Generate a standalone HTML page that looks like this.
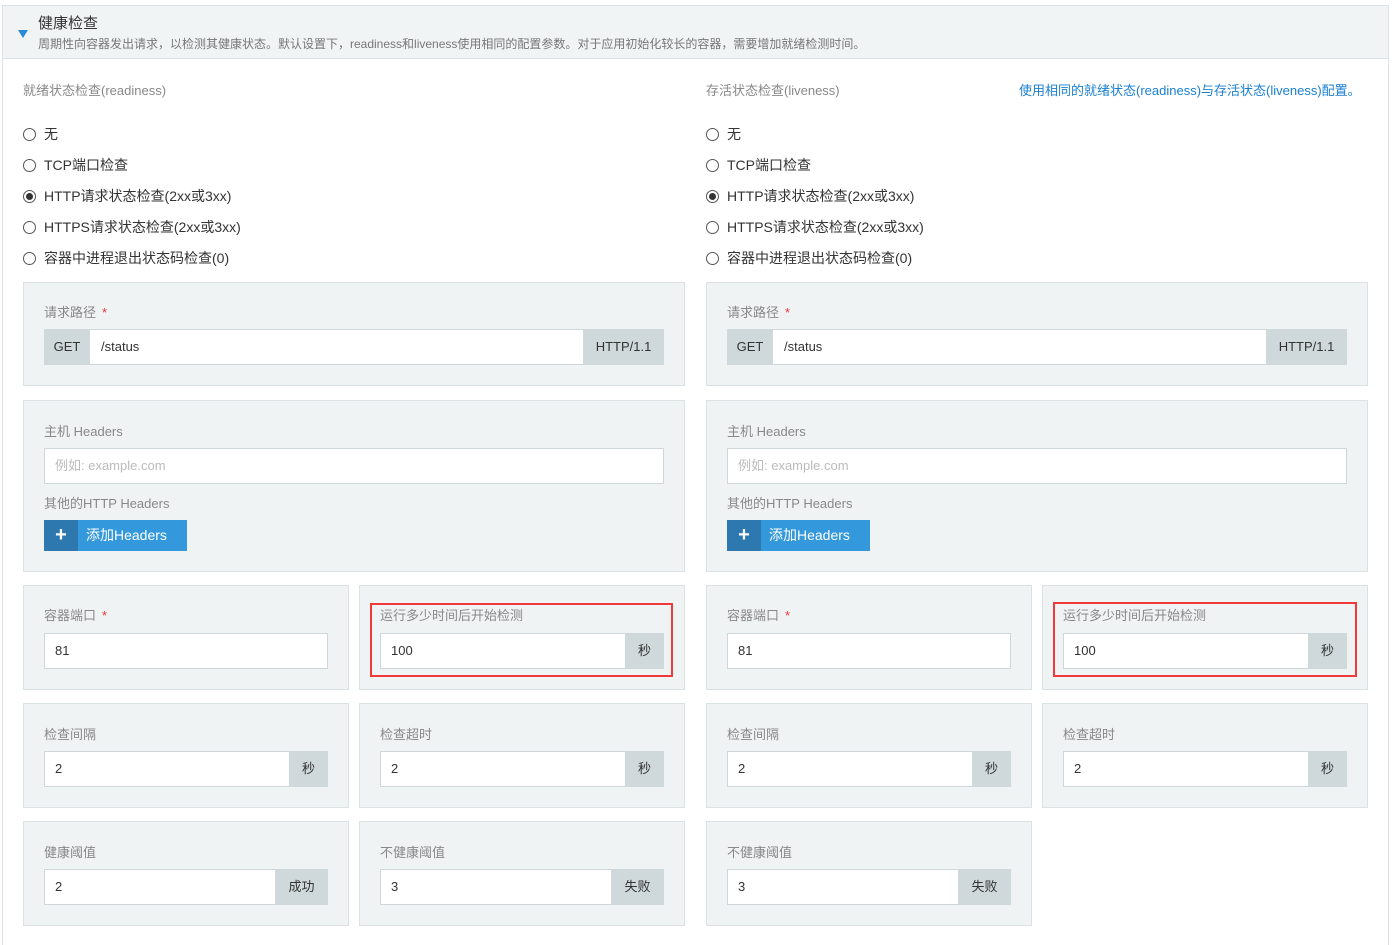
<!DOCTYPE html>
<html><head><meta charset="utf-8"><style>
*{box-sizing:border-box;margin:0;padding:0}
body{width:1393px;height:936px;background:#fff;position:relative;overflow:hidden;font-family:"Liberation Sans","Noto Sans CJK SC",sans-serif;color:#333}
.a{position:absolute}
.outer{left:2px;top:5px;width:1387px;height:940px;border:1px solid #dde3e5;border-bottom:none}
.hdr{left:2px;top:5px;width:1387px;height:54px;background:#f0f4f5;border:1px solid #dde3e5}
.p{position:absolute;background:#f0f3f4;border:1px solid #dbe2e4}
.l{position:absolute;font-size:13px;color:#888;white-space:nowrap;line-height:16px}
.st{color:#e33;margin-left:6px}
.in{position:absolute;height:36px;background:#fff;border:1px solid #cfd7da;font-size:13px;color:#333;line-height:34px;padding-left:10px;white-space:nowrap}
.ad{position:absolute;height:36px;background:#cfd8db;font-size:13px;color:#333;line-height:36px;text-align:center}
.r{position:absolute;font-size:14px;color:#333;white-space:nowrap;line-height:16px}
.r i{display:inline-block;width:13px;height:13px;border:1px solid #555;border-radius:50%;vertical-align:-2px;margin-right:8px;position:relative}
.r i.on:after{content:"";position:absolute;left:2px;top:2px;width:7px;height:7px;border-radius:50%;background:#333}
.red{position:absolute;border:2px solid #f03a3a}
.btn{position:absolute;height:31px;width:143px;background:#3398dc;color:#fff;font-size:14px;line-height:31px}
.btn b{position:absolute;left:0;top:0;width:34px;height:31px;background:#2e78b0;text-align:center;font-size:20px;line-height:30px}
.btn span{position:absolute;left:42px}
</style></head><body>
<div class="a outer"></div>
<div class="a hdr"></div>
<div class="a" style="left:18px;top:30px;width:0;height:0;border-left:5px solid transparent;border-right:5px solid transparent;border-top:8px solid #2a8ad6"></div>
<div class="a" style="left:38px;top:12px;font-size:15px;color:#333">健康检查</div>
<div class="a" style="left:38px;top:35px;font-size:12px;color:#777;white-space:nowrap">周期性向容器发出请求，以检测其健康状态。默认设置下，readiness和liveness使用相同的配置参数。对于应用初始化较长的容器，需要增加就绪检测时间。</div>

<div class="l" style="left:23px;top:83px">就绪状态检查(readiness)</div>
<div class="l" style="left:706px;top:83px">存活状态检查(liveness)</div>
<div class="l" style="left:1019px;top:83px;color:#1a7fd0">使用相同的就绪状态(readiness)与存活状态(liveness)配置。</div>

<div class="r" style="left:23px;top:126px"><i></i>无</div>
<div class="r" style="left:23px;top:157px"><i></i>TCP端口检查</div>
<div class="r" style="left:23px;top:188px"><i class="on"></i>HTTP请求状态检查(2xx或3xx)</div>
<div class="r" style="left:23px;top:219px"><i></i>HTTPS请求状态检查(2xx或3xx)</div>
<div class="r" style="left:23px;top:250px"><i></i>容器中进程退出状态码检查(0)</div>
<div class="r" style="left:706px;top:126px"><i></i>无</div>
<div class="r" style="left:706px;top:157px"><i></i>TCP端口检查</div>
<div class="r" style="left:706px;top:188px"><i class="on"></i>HTTP请求状态检查(2xx或3xx)</div>
<div class="r" style="left:706px;top:219px"><i></i>HTTPS请求状态检查(2xx或3xx)</div>
<div class="r" style="left:706px;top:250px"><i></i>容器中进程退出状态码检查(0)</div>

<!-- left -->
<div class="p" style="left:23px;top:282px;width:662px;height:104px"></div>
<div class="l" style="left:44px;top:305px">请求路径<span class="st">*</span></div>
<div class="in" style="left:44px;top:329px;width:620px;padding-left:56px">/status</div>
<div class="ad" style="left:44px;top:329px;width:46px">GET</div>
<div class="ad" style="left:583px;top:329px;width:81px">HTTP/1.1</div>

<div class="p" style="left:23px;top:400px;width:662px;height:172px"></div>
<div class="l" style="left:44px;top:424px">主机 Headers</div>
<div class="in" style="left:44px;top:448px;width:620px;color:#bbb">例如: example.com</div>
<div class="l" style="left:44px;top:496px">其他的HTTP Headers</div>
<div class="btn" style="left:44px;top:520px"><b>+</b><span>添加Headers</span></div>

<div class="p" style="left:23px;top:585px;width:326px;height:105px"></div>
<div class="l" style="left:44px;top:608px">容器端口<span class="st">*</span></div>
<div class="in" style="left:44px;top:633px;width:284px">81</div>
<div class="p" style="left:359px;top:585px;width:326px;height:105px"></div>
<div class="l" style="left:380px;top:608px">运行多少时间后开始检测</div>
<div class="in" style="left:380px;top:633px;width:284px">100</div>
<div class="ad" style="left:625px;top:633px;width:39px">秒</div>
<div class="red" style="left:370px;top:603px;width:303px;height:74px"></div>

<div class="p" style="left:23px;top:703px;width:326px;height:105px"></div>
<div class="l" style="left:44px;top:727px">检查间隔</div>
<div class="in" style="left:44px;top:751px;width:284px">2</div>
<div class="ad" style="left:289px;top:751px;width:39px">秒</div>
<div class="p" style="left:359px;top:703px;width:326px;height:105px"></div>
<div class="l" style="left:380px;top:727px">检查超时</div>
<div class="in" style="left:380px;top:751px;width:284px">2</div>
<div class="ad" style="left:625px;top:751px;width:39px">秒</div>

<div class="p" style="left:23px;top:821px;width:326px;height:105px"></div>
<div class="l" style="left:44px;top:845px">健康阈值</div>
<div class="in" style="left:44px;top:869px;width:284px">2</div>
<div class="ad" style="left:275px;top:869px;width:53px">成功</div>
<div class="p" style="left:359px;top:821px;width:326px;height:105px"></div>
<div class="l" style="left:380px;top:845px">不健康阈值</div>
<div class="in" style="left:380px;top:869px;width:284px">3</div>
<div class="ad" style="left:611px;top:869px;width:53px">失败</div>

<!-- right -->
<div class="p" style="left:706px;top:282px;width:662px;height:104px"></div>
<div class="l" style="left:727px;top:305px">请求路径<span class="st">*</span></div>
<div class="in" style="left:727px;top:329px;width:620px;padding-left:56px">/status</div>
<div class="ad" style="left:727px;top:329px;width:46px">GET</div>
<div class="ad" style="left:1266px;top:329px;width:81px">HTTP/1.1</div>

<div class="p" style="left:706px;top:400px;width:662px;height:172px"></div>
<div class="l" style="left:727px;top:424px">主机 Headers</div>
<div class="in" style="left:727px;top:448px;width:620px;color:#bbb">例如: example.com</div>
<div class="l" style="left:727px;top:496px">其他的HTTP Headers</div>
<div class="btn" style="left:727px;top:520px"><b>+</b><span>添加Headers</span></div>

<div class="p" style="left:706px;top:585px;width:326px;height:105px"></div>
<div class="l" style="left:727px;top:608px">容器端口<span class="st">*</span></div>
<div class="in" style="left:727px;top:633px;width:284px">81</div>
<div class="p" style="left:1042px;top:585px;width:326px;height:105px"></div>
<div class="l" style="left:1063px;top:608px">运行多少时间后开始检测</div>
<div class="in" style="left:1063px;top:633px;width:284px">100</div>
<div class="ad" style="left:1308px;top:633px;width:39px">秒</div>
<div class="red" style="left:1053px;top:602px;width:304px;height:75px"></div>

<div class="p" style="left:706px;top:703px;width:326px;height:105px"></div>
<div class="l" style="left:727px;top:727px">检查间隔</div>
<div class="in" style="left:727px;top:751px;width:284px">2</div>
<div class="ad" style="left:972px;top:751px;width:39px">秒</div>
<div class="p" style="left:1042px;top:703px;width:326px;height:105px"></div>
<div class="l" style="left:1063px;top:727px">检查超时</div>
<div class="in" style="left:1063px;top:751px;width:284px">2</div>
<div class="ad" style="left:1308px;top:751px;width:39px">秒</div>

<div class="p" style="left:706px;top:821px;width:326px;height:105px"></div>
<div class="l" style="left:727px;top:845px">不健康阈值</div>
<div class="in" style="left:727px;top:869px;width:284px">3</div>
<div class="ad" style="left:958px;top:869px;width:53px">失败</div>
</body></html>
